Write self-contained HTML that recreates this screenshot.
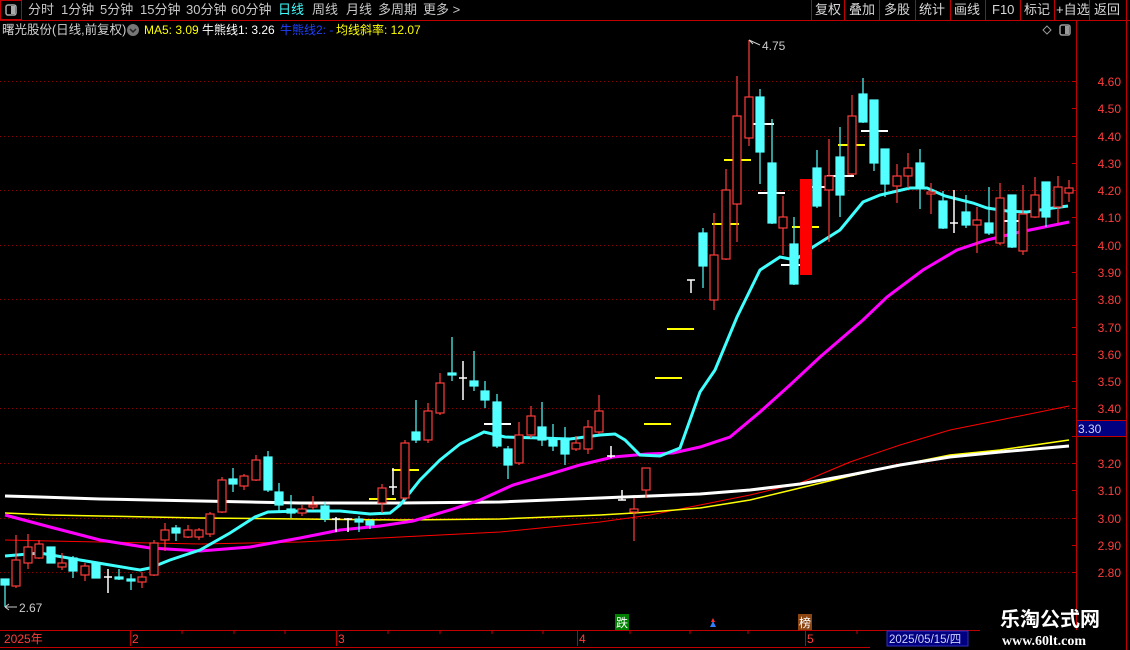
<!DOCTYPE html>
<html><head><meta charset="utf-8"><style>
*{margin:0;padding:0}
body{width:1130px;height:650px;background:#000;overflow:hidden;position:relative;font-family:"Liberation Sans","Noto Sans CJK SC",sans-serif}
.t{position:absolute;white-space:nowrap;font-size:13px;line-height:16px}
.m{color:#c8c8c8;top:2px}
.b{color:#d8d8d8;top:2px;font-size:13px}
svg{position:absolute;left:0;top:0}
</style></head><body>
<svg width="1130" height="650">
<!-- top bar -->
<rect x="0.5" y="0.5" width="21" height="19" fill="none" stroke="#c00000"/>
<rect x="6" y="5" width="10" height="10" rx="2" fill="none" stroke="#aaa" stroke-width="1.5"/><rect x="11" y="6" width="4" height="8" fill="#aaa"/>
<line x1="0" y1="20.5" x2="1130" y2="20.5" stroke="#c00000"/>
<g stroke="#c00000"><line x1="811.5" y1="0" x2="811.5" y2="20"/><line x1="844.5" y1="0" x2="844.5" y2="20"/><line x1="879.5" y1="0" x2="879.5" y2="20"/><line x1="915.5" y1="0" x2="915.5" y2="20"/><line x1="950.5" y1="0" x2="950.5" y2="20"/><line x1="985.5" y1="0" x2="985.5" y2="20"/><line x1="1020.5" y1="0" x2="1020.5" y2="20"/><line x1="1054.5" y1="0" x2="1054.5" y2="20"/><line x1="1089.5" y1="0" x2="1089.5" y2="20"/><line x1="1126.5" y1="0" x2="1126.5" y2="650"/>
<line x1="1076.5" y1="20" x2="1076.5" y2="630"/></g>
<circle cx="133" cy="30" r="6" fill="#777"/><path d="M130 29 L133 32 L136 29" stroke="#222" stroke-width="1.5" fill="none"/>
<path d="M1047 26 L1051 30 L1047 34 L1043 30 Z" fill="none" stroke="#999"/>
<rect x="1060" y="25" width="10" height="10" rx="2" fill="none" stroke="#999" stroke-width="1.5"/><rect x="1065" y="26" width="4" height="8" fill="#999"/>
<!-- grid -->
<g stroke="#8b0000" stroke-dasharray="1,3"><line x1="0" y1="81.5" x2="1076" y2="81.5"/><line x1="0" y1="136.5" x2="1076" y2="136.5"/><line x1="0" y1="190.5" x2="1076" y2="190.5"/><line x1="0" y1="245.5" x2="1076" y2="245.5"/><line x1="0" y1="299.5" x2="1076" y2="299.5"/><line x1="0" y1="354.5" x2="1076" y2="354.5"/><line x1="0" y1="408.5" x2="1076" y2="408.5"/><line x1="0" y1="463.5" x2="1076" y2="463.5"/><line x1="0" y1="518.5" x2="1076" y2="518.5"/><line x1="0" y1="572.5" x2="1076" y2="572.5"/></g>
<!-- axis ticks -->
<g stroke="#c00000"><line x1="1072" y1="81.5" x2="1076" y2="81.5"/><line x1="1072" y1="108.5" x2="1076" y2="108.5"/><line x1="1072" y1="136.5" x2="1076" y2="136.5"/><line x1="1072" y1="163.5" x2="1076" y2="163.5"/><line x1="1072" y1="190.5" x2="1076" y2="190.5"/><line x1="1072" y1="217.5" x2="1076" y2="217.5"/><line x1="1072" y1="245.5" x2="1076" y2="245.5"/><line x1="1072" y1="272.5" x2="1076" y2="272.5"/><line x1="1072" y1="299.5" x2="1076" y2="299.5"/><line x1="1072" y1="327.5" x2="1076" y2="327.5"/><line x1="1072" y1="354.5" x2="1076" y2="354.5"/><line x1="1072" y1="381.5" x2="1076" y2="381.5"/><line x1="1072" y1="408.5" x2="1076" y2="408.5"/><line x1="1072" y1="436.5" x2="1076" y2="436.5"/><line x1="1072" y1="463.5" x2="1076" y2="463.5"/><line x1="1072" y1="490.5" x2="1076" y2="490.5"/><line x1="1072" y1="518.5" x2="1076" y2="518.5"/><line x1="1072" y1="545.5" x2="1076" y2="545.5"/><line x1="1072" y1="572.5" x2="1076" y2="572.5"/></g>
<g fill="#ff3c3c" font-size="12" font-family="Liberation Sans,sans-serif" text-anchor="end">
<text x="1121" y="86">4.60</text><text x="1121" y="113">4.50</text><text x="1121" y="141">4.40</text><text x="1121" y="168">4.30</text><text x="1121" y="195">4.20</text><text x="1121" y="222">4.10</text><text x="1121" y="250">4.00</text><text x="1121" y="277">3.90</text><text x="1121" y="304">3.80</text><text x="1121" y="332">3.70</text><text x="1121" y="359">3.60</text><text x="1121" y="386">3.50</text><text x="1121" y="413">3.40</text><text x="1121" y="468">3.20</text><text x="1121" y="495">3.10</text><text x="1121" y="523">3.00</text><text x="1121" y="550">2.90</text><text x="1121" y="577">2.80</text></g>
<rect x="1076.5" y="420.5" width="50" height="16" fill="#000080" stroke="#c00000"/>
<text x="1078" y="433" fill="#d0d0ff" font-size="12" font-family="Liberation Sans,sans-serif">3.30</text>
<!-- MAs -->
<polyline fill="none" stroke="#ff0000" stroke-width="1" points="5,540 50,541 100,542 200,544 300,542 400,537 500,532 600,522 650,515 700,505 750,495 800,483 850,462 900,445 950,430 1000,420 1069,406"/>
<polyline fill="none" stroke="#ffff00" stroke-width="1.5" points="5,513 50,515 100,516 200,518 300,519 400,520 500,519 600,515 650,512 700,508 750,500 800,488 850,476 900,465 950,455 1000,450 1069,440"/>
<polyline fill="none" stroke="#ffffff" stroke-width="3" points="5,496 40,497 100,499 150,500 200,501 250,502 300,503 400,503 500,502 600,498 650,496 700,494 750,490 800,484 850,475 900,465 950,457 1000,452 1069,446"/>
<polyline fill="none" stroke="#ff00ff" stroke-width="3" points="5,515 50,527 100,540 150,548 200,551 250,547 300,538 340,530 380,526 413,521 450,510 480,500 513,485 547,475 580,465 613,457 647,454 673,453 700,447 730,437 760,412 790,385 820,357 863,320 887,297 923,270 957,250 987,240 1020,232 1069,222"/>
<polyline fill="none" stroke="#40ffff" stroke-width="3" points="5,556 40,553 80,560 110,565 140,570 150,568 170,560 200,550 230,533 255,517 268,512 300,511 340,511 370,514 390,513 400,505 420,480 440,460 460,444 484,432 505,437 540,438 570,439 600,435 615,434 625,440 640,455 660,456 680,448 700,392 715,370 737,317 760,270 780,257 795,260 813,247 840,230 863,202 880,195 910,188 927,188 945,196 973,203 987,208 1007,211 1027,212 1053,208 1068,206"/>
<!-- dashes -->
<g stroke="#ffff00" stroke-width="2"><line x1="392" y1="470" x2="419" y2="470"/><line x1="369" y1="499" x2="396" y2="499"/><line x1="644" y1="424" x2="671" y2="424"/><line x1="655" y1="378" x2="682" y2="378"/><line x1="667" y1="329" x2="694" y2="329"/><line x1="712" y1="224" x2="739" y2="224"/><line x1="724" y1="160" x2="751" y2="160"/><line x1="792" y1="227" x2="819" y2="227"/><line x1="838" y1="145" x2="865" y2="145"/></g>
<g stroke="#ffffff" stroke-width="2"><line x1="484" y1="424" x2="511" y2="424"/><line x1="747" y1="124" x2="774" y2="124"/><line x1="758" y1="193" x2="785" y2="193"/><line x1="781" y1="265" x2="808" y2="265"/><line x1="804" y1="187" x2="831" y2="187"/><line x1="827" y1="176" x2="854" y2="176"/><line x1="861" y1="131" x2="888" y2="131"/><line x1="998" y1="221" x2="1025" y2="221"/></g>
<!-- white doji -->
<g stroke="#fff" stroke-width="1.5">
<path d="M108 569V593M104 577H112"/><path d="M336 517V532M332 519H340"/><path d="M348 518V532M344 519H352"/><path d="M393 468V495M389 487H397"/><path d="M463 361V400M459 378H467"/><path d="M611 446V458M607 456H615"/><path d="M622 490V500M618 500H626"/><path d="M691 280V293M687 280H695"/><path d="M954 190V233M950 223H958"/></g>
<!-- red candles -->
<g stroke="#ff3c3c" stroke-width="1.2" fill="#000">
<line x1="16" y1="535" x2="16" y2="588"/><rect x="12" y="560" width="8" height="26"/>
<line x1="28" y1="534" x2="28" y2="569"/><rect x="24" y="547" width="8" height="16"/>
<line x1="39" y1="540" x2="39" y2="559"/><rect x="35" y="544" width="8" height="14"/>
<line x1="62" y1="553" x2="62" y2="570"/><rect x="58" y="563" width="8" height="4"/>
<line x1="85" y1="563" x2="85" y2="581"/><rect x="81" y="566" width="8" height="9"/>
<line x1="142" y1="572" x2="142" y2="588"/><rect x="138" y="577" width="8" height="5"/>
<line x1="154" y1="540" x2="154" y2="576"/><rect x="150" y="543" width="8" height="32"/>
<line x1="165" y1="523" x2="165" y2="551"/><rect x="161" y="530" width="8" height="10"/>
<line x1="188" y1="525" x2="188" y2="538"/><rect x="184" y="530" width="8" height="7"/>
<line x1="199" y1="528" x2="199" y2="540"/><rect x="195" y="530" width="8" height="7"/>
<line x1="210" y1="512" x2="210" y2="537"/><rect x="206" y="514" width="8" height="20"/>
<line x1="222" y1="477" x2="222" y2="513"/><rect x="218" y="480" width="8" height="32"/>
<line x1="244" y1="474" x2="244" y2="490"/><rect x="240" y="476" width="8" height="10"/>
<line x1="256" y1="455" x2="256" y2="481"/><rect x="252" y="460" width="8" height="20"/>
<line x1="302" y1="505" x2="302" y2="516"/><rect x="298" y="509" width="8" height="4"/>
<line x1="313" y1="496" x2="313" y2="510"/><rect x="309" y="505" width="8" height="2"/>
<line x1="382" y1="484" x2="382" y2="513"/><rect x="378" y="488" width="8" height="15"/>
<line x1="405" y1="440" x2="405" y2="500"/><rect x="401" y="443" width="8" height="55"/>
<line x1="428" y1="403" x2="428" y2="443"/><rect x="424" y="411" width="8" height="29"/>
<line x1="440" y1="373" x2="440" y2="415"/><rect x="436" y="383" width="8" height="30"/>
<line x1="519" y1="422" x2="519" y2="465"/><rect x="515" y="435" width="8" height="28"/>
<line x1="531" y1="406" x2="531" y2="438"/><rect x="527" y="416" width="8" height="19"/>
<line x1="576" y1="436" x2="576" y2="451"/><rect x="572" y="443" width="8" height="6"/>
<line x1="588" y1="420" x2="588" y2="454"/><rect x="584" y="427" width="8" height="22"/>
<line x1="599" y1="395" x2="599" y2="434"/><rect x="595" y="411" width="8" height="21"/>
<line x1="634" y1="498" x2="634" y2="541"/><rect x="630" y="509" width="8" height="3"/>
<line x1="646" y1="468" x2="646" y2="498"/><rect x="642" y="468" width="8" height="22"/>
<line x1="714" y1="213" x2="714" y2="310"/><rect x="710" y="255" width="8" height="45"/>
<line x1="726" y1="169" x2="726" y2="260"/><rect x="722" y="190" width="8" height="69"/>
<line x1="737" y1="76" x2="737" y2="242"/><rect x="733" y="116" width="8" height="88"/>
<line x1="749" y1="40" x2="749" y2="146"/><rect x="745" y="97" width="8" height="41"/>
<line x1="783" y1="196" x2="783" y2="255"/><rect x="779" y="217" width="8" height="11"/>
<line x1="829" y1="139" x2="829" y2="242"/><rect x="825" y="176" width="8" height="14"/>
<line x1="852" y1="95" x2="852" y2="175"/><rect x="848" y="116" width="8" height="58"/>
<line x1="897" y1="164" x2="897" y2="203"/><rect x="893" y="176" width="8" height="10"/>
<line x1="908" y1="153" x2="908" y2="188"/><rect x="904" y="168" width="8" height="8"/>
<line x1="931" y1="183" x2="931" y2="214"/><rect x="927" y="192" width="8" height="2"/>
<line x1="977" y1="207" x2="977" y2="253"/><rect x="973" y="220" width="8" height="5"/>
<line x1="1000" y1="183" x2="1000" y2="245"/><rect x="996" y="198" width="8" height="45"/>
<line x1="1023" y1="185" x2="1023" y2="255"/><rect x="1019" y="214" width="8" height="37"/>
<line x1="1035" y1="177" x2="1035" y2="218"/><rect x="1031" y="195" width="8" height="22"/>
<line x1="1058" y1="176" x2="1058" y2="223"/><rect x="1054" y="187" width="8" height="20"/>
<line x1="1069" y1="180" x2="1069" y2="202"/><rect x="1065" y="188" width="8" height="5"/>
</g>
<rect x="800" y="179" width="12" height="96" fill="#ff0000"/>
<!-- cyan candles -->
<g stroke="#54ffff" stroke-width="1.2" fill="#54ffff">
<line x1="5" y1="579" x2="5" y2="607"/><rect x="1" y="579" width="8" height="6"/>
<line x1="51" y1="547" x2="51" y2="563"/><rect x="47" y="547" width="8" height="16"/>
<line x1="73" y1="556" x2="73" y2="578"/><rect x="69" y="558" width="8" height="13"/>
<line x1="96" y1="563" x2="96" y2="578"/><rect x="92" y="563" width="8" height="15"/>
<line x1="119" y1="569" x2="119" y2="580"/><rect x="115" y="577" width="8" height="2"/>
<line x1="131" y1="574" x2="131" y2="590"/><rect x="127" y="579" width="8" height="2"/>
<line x1="176" y1="525" x2="176" y2="541"/><rect x="172" y="528" width="8" height="5"/>
<line x1="233" y1="468" x2="233" y2="492"/><rect x="229" y="479" width="8" height="5"/>
<line x1="268" y1="451" x2="268" y2="492"/><rect x="264" y="457" width="8" height="33"/>
<line x1="279" y1="483" x2="279" y2="513"/><rect x="275" y="492" width="8" height="13"/>
<line x1="291" y1="495" x2="291" y2="518"/><rect x="287" y="509" width="8" height="4"/>
<line x1="325" y1="502" x2="325" y2="522"/><rect x="321" y="506" width="8" height="13"/>
<line x1="359" y1="516" x2="359" y2="532"/><rect x="355" y="519" width="8" height="3"/>
<line x1="370" y1="519" x2="370" y2="529"/><rect x="366" y="521" width="8" height="4"/>
<line x1="416" y1="400" x2="416" y2="443"/><rect x="412" y="432" width="8" height="8"/>
<line x1="452" y1="337" x2="452" y2="381"/><rect x="448" y="373" width="8" height="2"/>
<line x1="474" y1="351" x2="474" y2="391"/><rect x="470" y="381" width="8" height="5"/>
<line x1="485" y1="381" x2="485" y2="408"/><rect x="481" y="391" width="8" height="9"/>
<line x1="497" y1="394" x2="497" y2="448"/><rect x="493" y="402" width="8" height="44"/>
<line x1="508" y1="446" x2="508" y2="479"/><rect x="504" y="449" width="8" height="16"/>
<line x1="542" y1="402" x2="542" y2="446"/><rect x="538" y="427" width="8" height="13"/>
<line x1="553" y1="424" x2="553" y2="451"/><rect x="549" y="440" width="8" height="6"/>
<line x1="565" y1="427" x2="565" y2="465"/><rect x="561" y="440" width="8" height="14"/>
<line x1="703" y1="228" x2="703" y2="288"/><rect x="699" y="233" width="8" height="33"/>
<line x1="760" y1="89" x2="760" y2="184"/><rect x="756" y="97" width="8" height="55"/>
<line x1="772" y1="119" x2="772" y2="224"/><rect x="768" y="163" width="8" height="60"/>
<line x1="794" y1="217" x2="794" y2="285"/><rect x="790" y="244" width="8" height="40"/>
<line x1="817" y1="150" x2="817" y2="208"/><rect x="813" y="168" width="8" height="38"/>
<line x1="840" y1="127" x2="840" y2="217"/><rect x="836" y="157" width="8" height="38"/>
<line x1="863" y1="78" x2="863" y2="123"/><rect x="859" y="94" width="8" height="28"/>
<line x1="874" y1="100" x2="874" y2="171"/><rect x="870" y="100" width="8" height="63"/>
<line x1="885" y1="149" x2="885" y2="197"/><rect x="881" y="149" width="8" height="35"/>
<line x1="920" y1="149" x2="920" y2="209"/><rect x="916" y="163" width="8" height="25"/>
<line x1="943" y1="191" x2="943" y2="229"/><rect x="939" y="201" width="8" height="27"/>
<line x1="966" y1="195" x2="966" y2="228"/><rect x="962" y="212" width="8" height="13"/>
<line x1="989" y1="187" x2="989" y2="235"/><rect x="985" y="223" width="8" height="10"/>
<line x1="1012" y1="195" x2="1012" y2="248"/><rect x="1008" y="195" width="8" height="52"/>
<line x1="1046" y1="182" x2="1046" y2="227"/><rect x="1042" y="182" width="8" height="35"/>
</g>
<!-- extrema labels -->
<path d="M749 40 L753 44 M749 40 L760 45" stroke="#ccc" fill="none"/>
<text x="762" y="50" fill="#ccc" font-size="12" font-family="Liberation Sans,sans-serif">4.75</text>
<path d="M5 607 H17 M5 607 L9 604 M5 607 L9 610" stroke="#ccc" fill="none"/>
<text x="19" y="612" fill="#ccc" font-size="12" font-family="Liberation Sans,sans-serif">2.67</text>
<!-- markers -->
<rect x="615" y="614" width="14" height="16" fill="#008000"/>
<text x="616" y="627" fill="#fff" font-size="12" font-family="Noto Sans CJK SC,sans-serif">跌</text>
<path d="M713 621 L716 627 L710 627 Z" fill="#3080ff"/><path d="M713 618 L715 622 L711 622Z" fill="#ff3030"/>
<rect x="798" y="614" width="14" height="16" fill="#8b4513"/>
<text x="799" y="627" fill="#fff" font-size="12" font-family="Noto Sans CJK SC,sans-serif">榜</text>
<!-- x axis -->
<line x1="0" y1="630.5" x2="980" y2="630.5" stroke="#c00000"/>
<line x1="0" y1="647.5" x2="870" y2="647.5" stroke="#c00000"/>
<g stroke="#c00000"><line x1="130.5" y1="630" x2="130.5" y2="646"/><line x1="336.5" y1="630" x2="336.5" y2="646"/><line x1="577.5" y1="630" x2="577.5" y2="646"/><line x1="805.5" y1="630" x2="805.5" y2="646"/>
<line x1="182" y1="630" x2="182" y2="634"/><line x1="234" y1="630" x2="234" y2="634"/><line x1="285" y1="630" x2="285" y2="634"/><line x1="388" y1="630" x2="388" y2="634"/><line x1="440" y1="630" x2="440" y2="634"/><line x1="492" y1="630" x2="492" y2="634"/><line x1="543" y1="630" x2="543" y2="634"/><line x1="630" y1="630" x2="630" y2="634"/><line x1="690" y1="630" x2="690" y2="634"/><line x1="748" y1="630" x2="748" y2="634"/><line x1="857" y1="630" x2="857" y2="634"/></g>
<g fill="#ff3c3c" font-size="12" font-family="Liberation Sans,Noto Sans CJK SC,sans-serif"><text x="4" y="643">2025年</text><text x="132" y="643">2</text><text x="338" y="643">3</text><text x="579" y="643">4</text><text x="807" y="643">5</text></g>
<rect x="887" y="631" width="81" height="15" fill="#000080" stroke="#3030c0"/>
<text x="889" y="643" fill="#d0d0ff" font-size="11.5" font-family="Liberation Sans,Noto Sans CJK SC,sans-serif">2025/05/15/四</text>
<text x="1000" y="626" fill="#fff" font-size="20" font-weight="bold" font-family="Noto Sans CJK SC,sans-serif">乐淘公式网</text>
<text x="1002" y="645" fill="#fff" font-size="14" font-weight="bold" font-family="Liberation Serif,serif">www.60lt.com</text>
</svg>
<div class="t m" style="left:28px">分时</div>
<div class="t m" style="left:61px">1分钟</div>
<div class="t m" style="left:100px">5分钟</div>
<div class="t m" style="left:140px">15分钟</div>
<div class="t m" style="left:186px">30分钟</div>
<div class="t m" style="left:231px">60分钟</div>
<div class="t m" style="left:278px;color:#40ffff">日线</div>
<div class="t m" style="left:312px">周线</div>
<div class="t m" style="left:346px">月线</div>
<div class="t m" style="left:378px">多周期</div>
<div class="t m" style="left:423px">更多 &gt;</div>
<div class="t b" style="left:815px">复权</div>
<div class="t b" style="left:849px">叠加</div>
<div class="t b" style="left:884px">多股</div>
<div class="t b" style="left:919px">统计</div>
<div class="t b" style="left:954px">画线</div>
<div class="t b" style="left:992px">F10</div>
<div class="t b" style="left:1024px">标记</div>
<div class="t b" style="left:1056px">+自选</div>
<div class="t b" style="left:1094px">返回</div>
<div class="t" style="left:2px;top:22px;font-size:12.5px;color:#d0d0d0">曙光股份(日线,前复权)</div>
<div class="t" style="left:144px;top:22px;font-size:12px;color:#ffff00">MA5: 3.09</div>
<div class="t" style="left:202px;top:22px;font-size:12px;color:#fff">牛熊线1: 3.26</div>
<div class="t" style="left:280px;top:22px;font-size:12px;color:#2040ff">牛熊线2: -</div>
<div class="t" style="left:336px;top:22px;font-size:12px;color:#ffff00">均线斜率: 12.07</div>
</body></html>
